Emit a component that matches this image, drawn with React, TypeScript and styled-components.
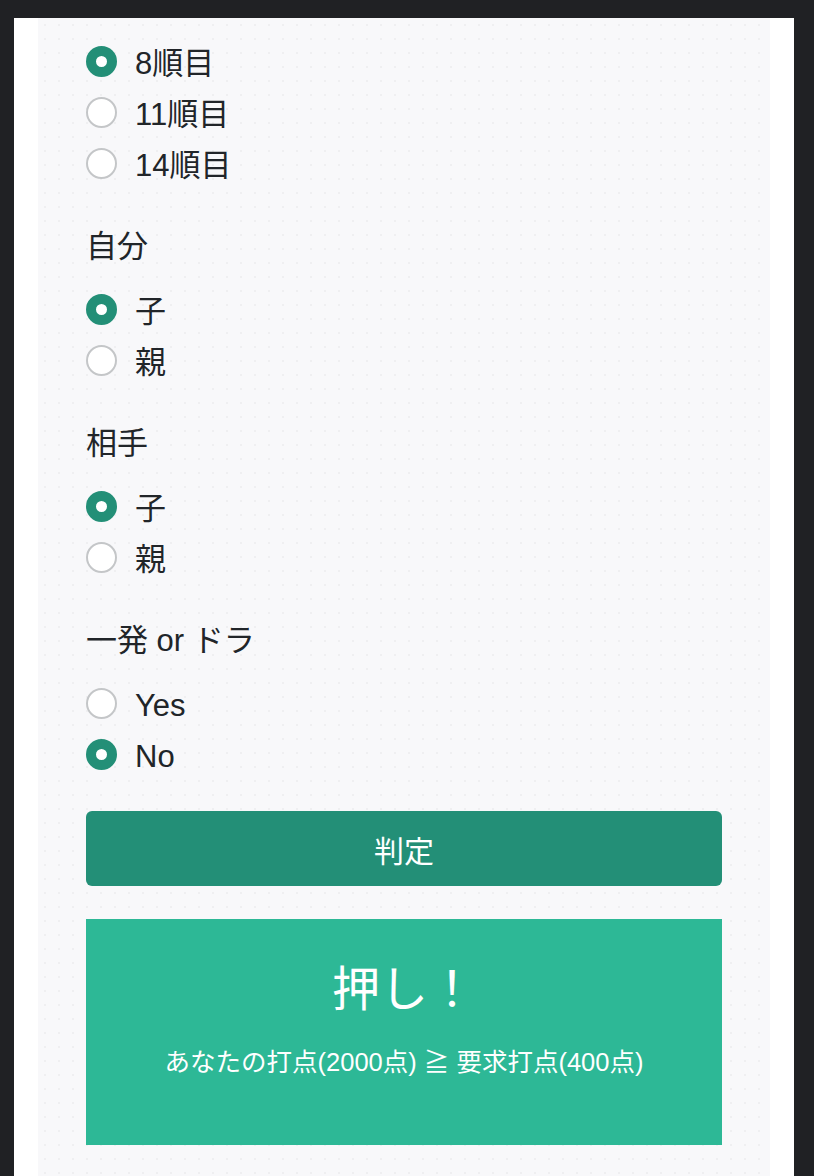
import React from 'react'
import styled, { createGlobalStyle } from 'styled-components'

const GlobalStyle = createGlobalStyle`
    html, body {
        margin: 0;
        padding: 0;
        background: #202124;
    }
    body {
        font-family: "Liberation Sans", "Noto Sans CJK JP", sans-serif;
        color: #212529;
    }
`

type Option = {
    label: string
    checked?: boolean
}

type GroupType = {
    title?: string
    options: Option[]
}

const groups: GroupType[] = [
    { options: [{ label: '8順目', checked: true }, { label: '11順目' }, { label: '14順目' }] },
    { title: '自分', options: [{ label: '子', checked: true }, { label: '親' }] },
    { title: '相手', options: [{ label: '子', checked: true }, { label: '親' }] },
    { title: '一発 or ドラ', options: [{ label: 'Yes' }, { label: 'No', checked: true }] },
]

const Group = (props: GroupType) => {
    return (
        <Fieldset>
            {props.title && <Legend>{props.title}</Legend>}
            {props.options.map((o) => (
                <RadioRow key={o.label}>
                    <Radio $checked={!!o.checked} />
                    <RadioText>{o.label}</RadioText>
                </RadioRow>
            ))}
        </Fieldset>
    )
}

const App = () => {
    return (
        <>
            <GlobalStyle />
            <Frame>
                <Panel>
                    {groups.map((g, i) => (
                        <Group key={i} title={g.title} options={g.options} />
                    ))}
                    <SubmitButton>判定</SubmitButton>
                    <ResultBox>
                        <ResultTitle>押し！</ResultTitle>
                        <ResultText>あなたの打点(2000点) ≧ 要求打点(400点)</ResultText>
                    </ResultBox>
                </Panel>
            </Frame>
        </>
    )
}

export default App

const Frame = styled.div`
    margin: 18px 20px 0 14px;
    background: #ffffff;
    padding: 0 24px;
    min-height: 1158px;
    display: flex;
`
const Panel = styled.div`
    flex: 1;
    background-color: #f8f8fa;
    background-image: radial-gradient(rgba(0, 0, 0, 0.035) 1px, transparent 1.2px);
    background-size: 14px 14px;
    padding: 23px 48px 30px;
`
const Fieldset = styled.div`
    display: flex;
    flex-direction: column;
    margin-bottom: 30px;
`
const Legend = styled.div`
    font-size: 31px;
    line-height: 45px;
    margin-bottom: 20px;
`
const RadioRow = styled.div`
    display: flex;
    align-items: center;
    height: 45px;
    margin-bottom: 6px;
`
const Radio = styled.span<{ $checked: boolean }>`
    box-sizing: border-box;
    width: 31px;
    height: 31px;
    border-radius: 50%;
    margin-top: -4px;
    flex-shrink: 0;
    background: #ffffff;
    border: ${(p) => (p.$checked ? '10px solid #238f77' : '2px solid #c4c6c8')};
`
const RadioText = styled.span`
    font-size: 31px;
    line-height: 45px;
    margin-left: 18px;
`
const SubmitButton = styled.button`
    display: block;
    width: 100%;
    height: 75px;
    margin-top: -4px;
    border: none;
    border-radius: 6px;
    background: #238f77;
    color: #ffffff;
    font-family: inherit;
    font-size: 30px;
    cursor: pointer;
`
const ResultBox = styled.div`
    margin-top: 33px;
    background: #2db896;
    color: #ffffff;
    text-align: center;
    padding: 42px 20px 64px;
`
const ResultTitle = styled.div`
    font-size: 48px;
    line-height: 57px;
    margin-bottom: 25px;
`
const ResultText = styled.div`
    font-size: 25.5px;
    line-height: 38px;
`
